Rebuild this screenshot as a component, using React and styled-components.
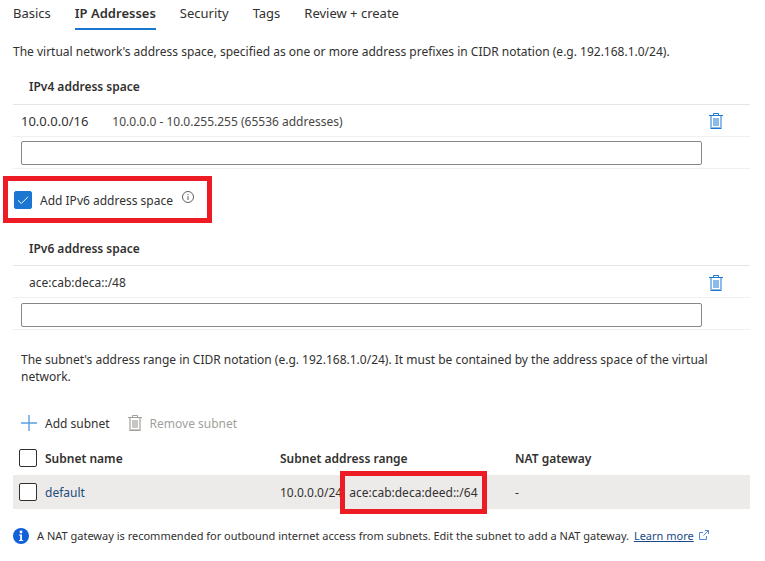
import React, { useState } from "react";
import styled, { createGlobalStyle } from "styled-components";

const GlobalStyle = createGlobalStyle`
  * {
    box-sizing: border-box;
  }

  body {
    margin: 0;
    background: #fff;
    color: #323130;
    font-family: "Segoe UI", "Noto Sans", "Open Sans", sans-serif;
    font-size: 12px;
    line-height: 17px;
  }

  button,
  input {
    font: inherit;
    color: inherit;
  }
`;

const Page = styled.main`
  padding: 0 15px 0 13px;
`;

const Tabs = styled.nav`
  display: flex;
  gap: 24px;
  height: 30px;
`;

const Tab = styled.button`
  padding: 0 0 2px;
  border: 0;
  border-bottom: 2px solid ${(p) => (p.$active ? "#1b76d2" : "transparent")};
  background: none;
  font-size: 13px;
  font-weight: ${(p) => (p.$active ? 600 : 400)};
  white-space: nowrap;
  cursor: pointer;
`;

const Intro = styled.p`
  margin: 13px 0 0;
`;

const AddressTable = styled.table`
  width: 100%;
  border-collapse: collapse;

  th {
    height: 36px;
    padding: 2px 16px 0;
    border-bottom: 1px solid #e5e5e5;
    text-align: left;
    font-weight: 600;
  }

  td {
    height: 32px;
    padding: 2px 0 0;
    border-bottom: 1px solid #f0f0f0;
  }

  td:last-child {
    width: 48px;
  }
`;

const AddressSection = styled.section`
  margin-top: ${(p) => p.$gap}px;
`;

const Address = styled.div`
  display: flex;
  align-items: center;
  gap: 24px;
  padding-left: ${(p) => (p.$indent ? 16 : 8)}px;
`;

const Prefix = styled.span`
  font-size: ${(p) => (p.$large ? 13 : 12)}px;
`;

const Range = styled.span`
  color: #484644;
`;

const AddressInput = styled.input`
  display: block;
  width: calc(100% - 8px);
  height: 24px;
  margin-left: 8px;
  padding: 0 8px;
  border: 1px solid #8a8886;
  border-radius: 2px;
  background: #fff;
`;

const IconButton = styled.button`
  display: block;
  margin-left: 7px;
  padding: 0;
  border: 0;
  background: none;
  cursor: pointer;

  svg {
    display: block;
  }
`;

const Highlight = styled.div`
  display: flex;
  align-items: center;
  width: fit-content;
  height: 47px;
  margin: 7px 0 0 -10px;
  padding: 2px 13px 0 6px;
  border: 5px solid #ed1c24;
`;

const CheckLabel = styled.label`
  display: flex;
  align-items: center;
  gap: 8px;
`;

const CheckInput = styled.input`
  appearance: none;
  display: block;
  flex: none;
  width: 18px;
  height: 18px;
  margin: 0;
  border: 1px solid #323130;
  border-radius: 2px;
  background: #fff;

  &:checked {
    border-color: #1b76d2;
    background: #1b76d2
      url("data:image/svg+xml,%3Csvg xmlns='http://www.w3.org/2000/svg' viewBox='0 0 16 16'%3E%3Cpath d='M3 8.3l3.3 3.2L13 4.8' fill='none' stroke='white'/%3E%3C/svg%3E")
      center / 16px no-repeat;
  }
`;

const Hint = styled.span`
  display: flex;
  align-self: flex-start;
  margin: 8px 0 0 9px;
`;

const SubnetText = styled.p`
  margin: 21px 8px 0;
`;

const Toolbar = styled.div`
  display: flex;
  gap: 18px;
  margin: 26px 8px 0;
`;

const ToolButton = styled.button`
  display: flex;
  align-items: center;
  gap: 8px;
  height: 24px;
  padding: 0;
  border: 0;
  background: none;
  cursor: pointer;

  &:disabled {
    color: #a19f9d;
    cursor: default;
  }
`;

const SubnetTable = styled.table`
  width: 100%;
  margin-top: 6px;
  border-collapse: collapse;
  table-layout: fixed;

  th,
  td {
    height: 34px;
    padding: 0;
    text-align: left;
    white-space: nowrap;
  }

  th {
    font-weight: 600;
  }

  tbody tr {
    background: #edebe9;
  }
`;

const CheckCell = styled.th`
  width: 32px;

  && {
    padding-left: 6px;
  }
`;

const NameCell = styled.th`
  width: 235px;
`;

const RangeCell = styled.th`
  width: 235px;
`;

const SubnetLink = styled.a`
  color: #1b4d80;
  text-decoration: none;
`;

const Ranges = styled.div`
  display: flex;
  gap: 7px;
`;

const Marked = styled.span`
  position: relative;

  &::after {
    content: "";
    position: absolute;
    inset: -13px -9px;
    border: 5px solid #ed1c24;
  }
`;

const Notice = styled.div`
  display: flex;
  align-items: center;
  gap: 8px;
  margin-top: 18px;
  font-size: 11px;

  svg {
    flex: none;
  }
`;

const LearnMore = styled.a`
  margin: 0 5px 0 2px;
  color: #174a84;
`;

const Trash = ({ line = "#1b76d2", fill = "#8cbbe9" }) => (
  <svg width="14" height="16" viewBox="0 0 14 16" aria-hidden="true">
    <path d="M2 3v12h10V3" fill="#fff" stroke={fill} strokeWidth="2" />
    <path d="M4 5h6v8H4z" fill={fill} />
    <path d="M0 2.5h14M4.5 2.5v-2h5v2M2 15.5h10" fill="none" stroke={line} />
  </svg>
);

const Plus = () => (
  <svg width="16" height="16" viewBox="0 0 16 16" aria-hidden="true">
    <path d="M8 0v16M0 8h16" stroke="#5c9fe0" strokeWidth="1.4" />
  </svg>
);

const InfoOutline = () => (
  <svg width="12" height="12" viewBox="0 0 12 12" aria-hidden="true">
    <circle cx="6" cy="6" r="5.5" fill="none" stroke="#605e5c" />
    <path d="M6 5v4M6 3v1" stroke="#605e5c" />
  </svg>
);

const InfoFilled = () => (
  <svg width="16" height="16" viewBox="0 0 16 16" aria-hidden="true">
    <circle cx="8" cy="8" r="8" fill="#1160d8" />
    <circle cx="8" cy="4" r="1.4" fill="#fff" />
    <path d="M6 6.5h3V12h1.2v1H6v-1h1.2V7.5H6z" fill="#fff" />
  </svg>
);

const External = () => (
  <svg width="10" height="10" viewBox="0 0 10 10" aria-hidden="true">
    <path
      d="M4 2.5H.5v7h7V6M6 .5h3.5V4M9.5.5l-5 5"
      fill="none"
      stroke="#4f86e0"
    />
  </svg>
);

const tabs = ["Basics", "IP Addresses", "Security", "Tags", "Review + create"];

const AddressSpace = ({ version, prefix, range, gap }) => {
  const [value, setValue] = useState("");

  return (
    <AddressSection $gap={gap}>
      <AddressTable>
        <thead>
          <tr>
            <th colSpan={2}>{`${version} address space`}</th>
          </tr>
        </thead>
        <tbody>
          <tr>
            <td>
              <Address $indent={!range}>
                <Prefix $large={!!range}>{prefix}</Prefix>
                {range && <Range>{range}</Range>}
              </Address>
            </td>
            <td>
              <IconButton type="button" aria-label={`Delete ${prefix}`}>
                <Trash />
              </IconButton>
            </td>
          </tr>
          <tr>
            <td>
              <AddressInput
                type="text"
                aria-label={`New ${version} address space`}
                value={value}
                onChange={(e) => setValue(e.target.value)}
              />
            </td>
            <td />
          </tr>
        </tbody>
      </AddressTable>
    </AddressSection>
  );
};

const App = () => {
  const [activeTab, setActiveTab] = useState("IP Addresses");
  const [ipv6, setIpv6] = useState(true);

  return (
    <>
      <GlobalStyle />
      <Page>
        <Tabs>
          {tabs.map((tab) => (
            <Tab
              key={tab}
              type="button"
              $active={tab === activeTab}
              onClick={() => setActiveTab(tab)}
            >
              {tab}
            </Tab>
          ))}
        </Tabs>

        <Intro>
          The virtual network's address space, specified as one or more address
          prefixes in CIDR notation (e.g. 192.168.1.0/24).
        </Intro>

        <AddressSpace
          version="IPv4"
          prefix="10.0.0.0/16"
          range="10.0.0.0 - 10.0.255.255 (65536 addresses)"
          gap={8}
        />

        <Highlight>
          <CheckLabel>
            <CheckInput
              type="checkbox"
              checked={ipv6}
              onChange={(e) => setIpv6(e.target.checked)}
            />
            Add IPv6 address space
          </CheckLabel>
          <Hint>
            <InfoOutline />
          </Hint>
        </Highlight>

        <AddressSpace version="IPv6" prefix="ace:cab:deca::/48" gap={7} />

        <SubnetText>
          The subnet's address range in CIDR notation (e.g. 192.168.1.0/24). It
          must be contained by the address space of the virtual network.
        </SubnetText>

        <Toolbar>
          <ToolButton type="button">
            <Plus />
            Add subnet
          </ToolButton>
          <ToolButton type="button" disabled>
            <Trash line="#a19f9d" fill="#c8c6c4" />
            Remove subnet
          </ToolButton>
        </Toolbar>

        <SubnetTable>
          <thead>
            <tr>
              <CheckCell>
                <CheckInput type="checkbox" aria-label="Select all subnets" />
              </CheckCell>
              <NameCell>Subnet name</NameCell>
              <RangeCell>Subnet address range</RangeCell>
              <th>NAT gateway</th>
            </tr>
          </thead>
          <tbody>
            <tr>
              <CheckCell as="td">
                <CheckInput type="checkbox" aria-label="Select default" />
              </CheckCell>
              <td>
                <SubnetLink href="#default">default</SubnetLink>
              </td>
              <td>
                <Ranges>
                  <span>10.0.0.0/24</span>
                  <Marked>ace:cab:deca:deed::/64</Marked>
                </Ranges>
              </td>
              <td>-</td>
            </tr>
          </tbody>
        </SubnetTable>

        <Notice>
          <InfoFilled />
          <span>
            A NAT gateway is recommended for outbound internet access from
            subnets. Edit the subnet to add a NAT gateway.{" "}
            <LearnMore href="#learn-more">Learn more</LearnMore>
            <External />
          </span>
        </Notice>
      </Page>
    </>
  );
};

export default App;
